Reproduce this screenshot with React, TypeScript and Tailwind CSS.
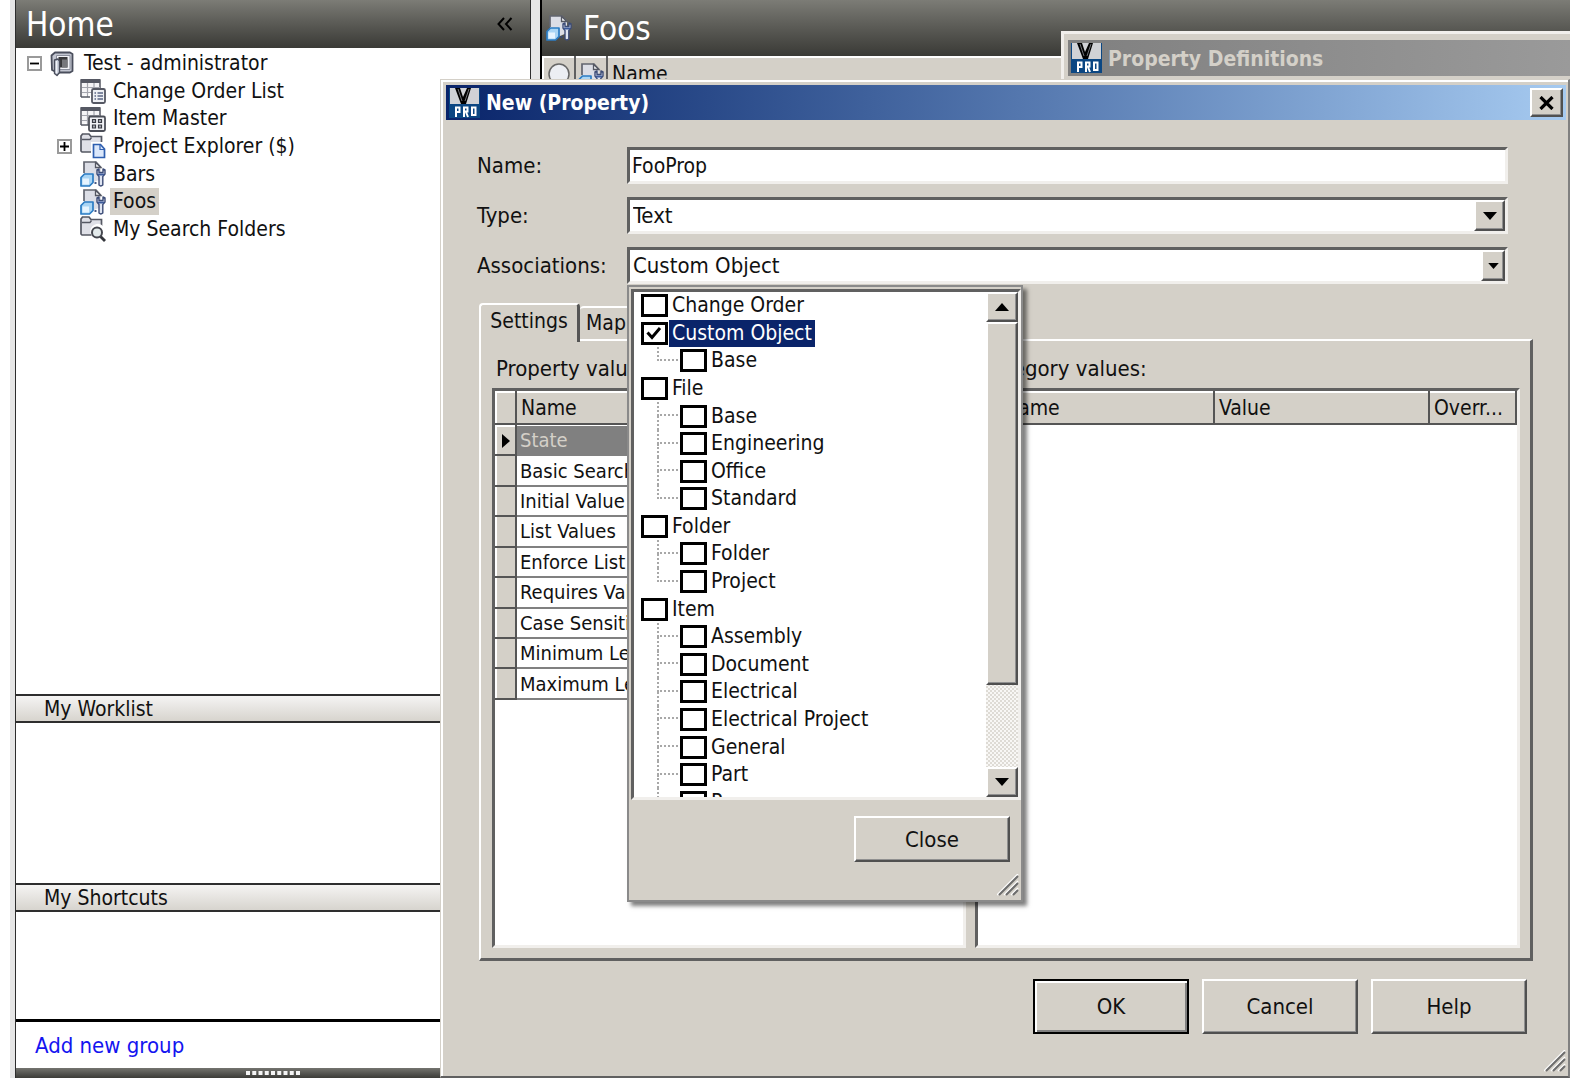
import { useState } from 'react'
import type { ReactNode } from 'react'

const raised = 'border-2 border-t-white border-l-white border-r-[#505050] border-b-[#505050] bg-[#d4d0c8] shadow-[inset_-1px_-1px_0_#909090]'
const sunken = 'border-[3px] border-t-[#606060] border-l-[#606060] border-r-[#f1efec] border-b-[#f1efec]'

type Node = { label: string; children?: string[] }

const associations: Node[] = [
  { label: 'Change Order' },
  { label: 'Custom Object', children: ['Base'] },
  { label: 'File', children: ['Base', 'Engineering', 'Office', 'Standard'] },
  { label: 'Folder', children: ['Folder', 'Project'] },
  { label: 'Item', children: ['Assembly', 'Document', 'Electrical', 'Electrical Project', 'General', 'Part', 'P'] },
]

const settings = [
  'State',
  'Basic Search',
  'Initial Value',
  'List Values',
  'Enforce List Values',
  'Requires Value',
  'Case Sensitivity',
  'Minimum Length',
  'Maximum Length',
]

function VaultIcon() {
  return (
    <svg viewBox="0 0 24 26" className="h-[26px] w-6 shrink-0">
      <path d="M1.500 4.500 5 1.500h15l2.500 1.500v17L20 21.500H7L2 19z" fill="#c3c6d1" stroke="#4a4e5c" strokeWidth="1.800" strokeLinejoin="round" />
      <path d="M6.500 4.500h13.500v14H6.500z" fill="#f2f3f7" stroke="#8b8f9c" />
      <path d="M8.500 6h9v10.500h-9z" fill="#38383a" />
      <path d="M12 8.500h5.500v8H12z" fill="#77787c" />
      <path d="M4.500 9 8 8l1.500 2v11.500L7 24.500l-2.500-2z" fill="#c9cedb" stroke="#4a4e5c" strokeWidth="1.400" strokeLinejoin="round" />
      <path d="M6.500 10v12" stroke="#f2f4f9" strokeWidth="1.300" />
    </svg>
  )
}

function SheetIcon({ kind }: { kind: 'list' | 'grid' }) {
  return (
    <svg viewBox="0 0 26 26" className="size-[26px] shrink-0">
      <path d="M1 19V2h19v8" fill="#f4f4f6" stroke="#555863" strokeWidth="1.500" />
      <path d="M1 1h19v4H1z" fill="#555863" />
      <path d="M2 9.500h18M2 14.500h10M7.500 5v14M14 5v6" stroke="#a4a6ae" strokeWidth="1.200" />
      <path d="M1 19h9" stroke="#555863" strokeWidth="1.500" />
      {kind === 'list' ? (
        <>
          <rect x="12" y="11" width="13" height="14" rx="1.500" fill="#eef0f4" stroke="#555863" strokeWidth="1.800" />
          <path d="M14.500 15h1.500M17.500 15h5.500M14.500 18h1.500M17.500 18h5.500M14.500 21h1.500M17.500 21h5.500" stroke="#5b6584" strokeWidth="1.300" />
        </>
      ) : (
        <>
          <rect x="9" y="10.500" width="16" height="14.500" rx="1.500" fill="#f1f2f6" stroke="#4c4f58" strokeWidth="1.800" />
          <path d="M12.500 13.500h3v3h-3zM18.500 13.500h3v3h-3zM12.500 19h3v3h-3zM18.500 19h3v3h-3z" fill="#aeb1ba" stroke="#3a3c44" strokeWidth="1.200" />
        </>
      )}
    </svg>
  )
}

function FolderIcon({ kind }: { kind: 'doc' | 'search' }) {
  return (
    <svg viewBox="0 0 26 26" className="size-[26px] shrink-0">
      <path d="M1 18V3l1.500-2H9l2 2.500h10.500V19H2z" fill="#dfe0e7" stroke="#555863" strokeWidth="1.700" />
      <path d="M2 6.500h8l1.500-2" fill="none" stroke="#555863" strokeWidth="1.400" />
      {kind === 'doc' ? (
        <>
          <path d="M11 9h15v17H11z" fill="#fff" />
          <path d="M13.500 11.500h7l4 4.500v8.500h-11z" fill="#dce8fb" stroke="#2f5fb0" strokeWidth="1.700" />
          <path d="M20 12v4.500h4.500" fill="none" stroke="#2f5fb0" strokeWidth="1.200" />
        </>
      ) : (
        <>
          <path d="M10.500 17a7.500 7.500 0 0 1 13-6.500V21H12z" fill="#fff" />
          <path d="M20.500 20.500 25 25" stroke="#33353b" strokeWidth="2.800" />
          <circle cx="17" cy="16.500" r="5" fill="#e4ebec" stroke="#45474f" strokeWidth="2" />
        </>
      )}
    </svg>
  )
}

function ObjectIcon() {
  return (
    <svg viewBox="0 0 26 26" className="size-[26px] shrink-0">
      <path d="M4 13V1h12l5 5v12l-7 3H4z" fill="#dcdee6" />
      <path d="M4 12V1h12L21 6.500" fill="none" stroke="#62656f" strokeWidth="1.700" />
      <path d="M15.500 1.500v5H21z" fill="#f5f6f8" stroke="#555863" strokeWidth="1.300" />
      <path d="M1 16.500 4.500 13H13v8.500L9.500 25H1z" fill="#a9d5f5" stroke="#2b7cc4" strokeWidth="1.700" strokeLinejoin="round" />
      <path d="M2.500 17.500h6.500v6H2.500z" fill="#e6f4ff" />
      <path d="M14.500 22h2" stroke="#34497a" strokeWidth="1.800" />
      <path d="M17 9v4l2 2.500v8.500q1.800 1.800 3.800 0v-8.500L25 13V9l-2-1v3.500h-4V8z" fill="#dfe5f2" stroke="#3c4c77" strokeWidth="1.400" strokeLinejoin="round" />
      <path d="M18 12.500h6v2h-6z" fill="#3c5a9a" />
    </svg>
  )
}

function ProIcon() {
  return (
    <svg viewBox="0 0 31 30" aria-hidden="true" className="h-[30px] w-[31px] shrink-0">
      <rect width="31" height="30" fill="#0b4783" />
      <rect x="1" width="29" height="16" fill="#d0d2d6" />
      <path d="M6 0h5l3 9 4-9h4l-5 16h-5z" fill="#000" />
      <path d="M9 1l4 12M20 1l-4 12" stroke="#6d6f75" />
      <path d="M7 29V19.500h3.500V24H7M15 29V19.500h3.500v4H15M17 24l2 5M23 19.500h3.500V27H23z" fill="none" stroke="#fff" strokeWidth="2" />
    </svg>
  )
}

function Arrow({ up, small }: { up?: boolean; small?: boolean }) {
  return (
    <svg viewBox="0 0 14 8" className={small ? 'h-[6px] w-[11px]' : 'h-2 w-[14px]'}>
      <path d={up ? 'M0 8h14L7 0z' : 'M0 0h14L7 8z'} fill="#000" />
    </svg>
  )
}

function Grip() {
  return (
    <svg viewBox="0 0 22 22" aria-hidden="true" className="size-[22px]">
      <path d="M0 21 21 0M7 21 21 7M14 21l7-7" stroke="#fff" strokeWidth="1.500" />
      <path d="M2 21 21 2M9 21 21 9M16 21l5-5" stroke="#6d6d6d" strokeWidth="2" />
    </svg>
  )
}

function Expander({ open }: { open?: boolean }) {
  return (
    <button aria-label={open ? 'Collapse' : 'Expand'} className="flex size-[15px] shrink-0 items-center justify-center border-2 border-[#9a9a9a] bg-white">
      <svg viewBox="0 0 9 9" className="size-[9px]">
        <path d={open ? 'M0 4.500h9' : 'M0 4.500h9M4.500 0v9'} stroke="#000" strokeWidth="1.800" />
      </svg>
    </button>
  )
}

function TreeRow({ icon, children, expander, selected }: { icon: ReactNode; children: ReactNode; expander?: ReactNode; selected?: boolean }) {
  return (
    <li className="flex items-center pl-[41px]">
      <span className="flex w-[23px] shrink-0">{expander}</span>
      {icon}
      <span className={selected ? 'ml-1 bg-[#d4d0c8] px-[3px]' : 'ml-1 px-[3px]'}>{children}</span>
    </li>
  )
}

function GroupHeader({ children }: { children: ReactNode }) {
  return (
    <h2 className="flex h-[29px] shrink-0 items-center border-y-2 border-[#2e2e2e] bg-linear-to-b from-[#f5f4f3] to-[#d7d4ce] pt-[2px] pl-[28px]">
      {children}
    </h2>
  )
}

function Sidebar() {
  return (
    <aside className="flex w-[516px] shrink-0 flex-col border-x border-[#2e2e2e] bg-white">
      <header className="flex h-12 shrink-0 items-center justify-between bg-linear-to-b from-[#7c7c76] to-[#3a3a36] pr-[17px] pl-[10px]">
        <h1 className="text-[33px] leading-none text-white">Home</h1>
        <button aria-label="Collapse panel">
          <svg viewBox="0 0 16 14" className="h-[14px] w-4">
            <path d="M7 1 1.500 7 7 13M14.500 1 9 7l5.500 6" fill="none" stroke="#000" strokeWidth="2" />
          </svg>
        </button>
      </header>
      <div className="flex-1 pt-[2px]">
        <ul className="grid h-[193px] auto-rows-fr">
          <li className="flex items-center pl-[11px]">
            <Expander open />
            <span className="ml-[8px] flex"><VaultIcon /></span>
            <span className="ml-[7px] px-[3px]">Test - administrator</span>
          </li>
          <TreeRow icon={<SheetIcon kind="list" />}>Change Order List</TreeRow>
          <TreeRow icon={<SheetIcon kind="grid" />}>Item Master</TreeRow>
          <TreeRow icon={<FolderIcon kind="doc" />} expander={<Expander />}>Project Explorer ($)</TreeRow>
          <TreeRow icon={<ObjectIcon />}>Bars</TreeRow>
          <TreeRow icon={<ObjectIcon />} selected>Foos</TreeRow>
          <TreeRow icon={<FolderIcon kind="search" />}>My Search Folders</TreeRow>
        </ul>
      </div>
      <GroupHeader>My Worklist</GroupHeader>
      <div className="h-[160px] shrink-0" />
      <GroupHeader>My Shortcuts</GroupHeader>
      <div className="h-[107px] shrink-0" />
      <div className="flex h-[49px] shrink-0 items-center border-t-[3px] border-black pl-[19px]">
        <a href="#" className="text-[22px] text-[#1414f0]">Add new group</a>
      </div>
      <div className="flex h-[10px] shrink-0 items-center justify-center bg-linear-to-b from-[#74746f] to-[#3c3c38]">
        <svg viewBox="0 0 54 4" className="h-1 w-[54px]">
          <path d="M0 2h54" stroke="#f4f4f4" strokeWidth="4" strokeDasharray="4 2.250" />
        </svg>
      </div>
    </aside>
  )
}

function FoosPane() {
  return (
    <main className="min-w-0 flex-1 border-l-2 border-black bg-white">
      <header className="flex h-14 items-center bg-linear-to-b from-[#7c7c76] to-[#3a3a36] pl-1">
        <ObjectIcon />
        <h1 className="ml-[11px] text-[33px] leading-none text-white">Foos</h1>
      </header>
      <table className="w-full border-t-2 border-l-2 border-[#606060] bg-[#d4d0c8]">
        <thead>
          <tr>
            <th scope="col" aria-label="Status" className="w-8 border-2 border-t-white border-r-[#606060] border-l-white">
              <svg viewBox="0 0 22 22" className="mx-auto size-[22px]">
                <circle cx="11" cy="11" r="10" fill="#eceef3" stroke="#666" strokeWidth="1.500" />
              </svg>
            </th>
            <th scope="col" aria-label="Kind" className="w-8 border-2 border-t-white border-r-[#606060] border-l-white pt-1">
              <span className="flex justify-center"><ObjectIcon /></span>
            </th>
            <th scope="col" className="h-[34px] border-t-2 border-l-2 border-white pl-1 text-left font-normal">Name</th>
          </tr>
        </thead>
      </table>
    </main>
  )
}

function HeadCell({ children, className }: { children?: ReactNode; className: string }) {
  return (
    <th scope="col" className={`border-2 border-t-white border-r-[#555] border-b-[#555] border-l-white bg-[#d4d0c8] px-1 text-left leading-6 font-normal ${className}`}>
      {children}
    </th>
  )
}

function SettingsTab() {
  return (
    <div className="relative z-0 flex flex-1 gap-[9px] border-t-2 border-r-[3px] border-b-[3px] border-l-2 border-t-white border-r-[#606060] border-b-[#606060] border-l-white pt-[14px] pr-[10px] pb-[10px] pl-[11px]">
      <section className="flex w-[474px] shrink-0 flex-col">
        <h2 className="h-[33px] pl-1 text-[22px] leading-7">Property values:</h2>
        <div className={`flex-1 overflow-hidden bg-white ${sunken}`}>
          <table className="w-full table-fixed border-collapse whitespace-nowrap">
            <thead>
              <tr className="h-[32px]">
                <HeadCell className="w-5" />
                <HeadCell className="">Name</HeadCell>
              </tr>
            </thead>
          </table>
          <table className="h-[275px] w-full table-fixed border-collapse text-[20px] whitespace-nowrap">
            <tbody>
              {settings.map((s, i) => (
                <tr key={s} className={i === 0 ? 'bg-[#808080] text-[#d4d0c8]' : ''}>
                  <td className="w-5 border-2 border-t-white border-r-[#555] border-b-[#555] border-l-white bg-[#d4d0c8]">
                    {i === 0 && (
                      <svg viewBox="0 0 8 14" className="mx-auto h-[14px] w-2">
                        <path d="M0 0v14l8-7z" fill="#000" />
                      </svg>
                    )}
                  </td>
                  <th scope="row" className="border-b-2 border-[#808080] pl-[3px] text-left leading-6 font-normal">{s}</th>
                </tr>
              ))}
            </tbody>
          </table>
        </div>
      </section>
      <section className="flex min-w-0 flex-1 flex-col">
        <h2 className="h-[33px] pl-1 text-[22px] leading-7">Category values:</h2>
        <div className={`flex-1 overflow-hidden bg-white ${sunken}`}>
          <table className="w-full table-fixed border-collapse whitespace-nowrap">
            <thead>
              <tr className="h-[32px]">
                <HeadCell className="w-5" />
                <HeadCell className="">Name</HeadCell>
                <HeadCell className="">Value</HeadCell>
                <HeadCell className="w-[87px]">Overr...</HeadCell>
              </tr>
            </thead>
          </table>
        </div>
      </section>
    </div>
  )
}

function CheckItem({ label, checked, onChange, selected }: { label: string; checked: boolean; onChange: () => void; selected?: boolean }) {
  return (
    <label className="flex h-full items-center">
      <span className="relative flex">
        <input
          type="checkbox"
          checked={checked}
          onChange={onChange}
          className="h-[23px] w-[27px] appearance-none border-[3px] border-black bg-white"
        />
        {checked && (
          <svg viewBox="0 0 27 23" className="pointer-events-none absolute inset-0 h-[23px] w-[27px]">
            <path d="M6.500 10.500 11 15.500 19 6" fill="none" stroke="#000" strokeWidth="3" />
          </svg>
        )}
      </span>
      <span className={selected ? 'ml-[1px] bg-[#0a246a] px-[3px] text-white' : 'ml-[1px] px-[3px]'}>{label}</span>
    </label>
  )
}

function AssociationsPopup() {
  const [checked, setChecked] = useState<string[]>(['Custom Object'])
  const toggle = (id: string) =>
    setChecked(checked.includes(id) ? checked.filter((c) => c !== id) : [...checked, id])

  return (
    <div className="absolute top-full left-0 z-10 mt-px flex h-[617px] w-[396px] flex-col border-2 border-[#8a8a8a] bg-[#d4d0c8] py-[2px] pl-[2px] shadow-[4px_4px_4px_#00000080]">
      <div className={`flex h-[511px] shrink-0 overflow-hidden bg-white ${sunken}`}>
        <ul className="grid h-[524px] flex-1 auto-rows-fr">
          {associations.flatMap(({ label, children = [] }) => [
            <li key={label} className="flex pl-[7px]">
              <CheckItem
                label={label}
                checked={checked.includes(label)}
                onChange={() => toggle(label)}
                selected={label === 'Custom Object'}
              />
            </li>,
            ...children.map((child, i) => (
              <li key={`${label}/${child}`} className="flex pl-[23px]">
                <span className="flex w-[23px] flex-col">
                  <span className="mr-[2px] h-1/2 border-b-2 border-l-2 border-dotted border-[#a8a8a8]" />
                  {i < children.length - 1 && <span className="h-1/2 border-l-2 border-dotted border-[#a8a8a8]" />}
                </span>
                <CheckItem
                  label={child}
                  checked={checked.includes(`${label}/${child}`)}
                  onChange={() => toggle(`${label}/${child}`)}
                />
              </li>
            )),
          ])}
        </ul>
        <div className="flex w-8 flex-col bg-[repeating-conic-gradient(#dedbd5_0_25%,#f8f7f5_0_50%)] bg-size-[4px_4px]">
          <button aria-label="Scroll up" className={`flex h-[30px] items-center justify-center ${raised}`}><Arrow up /></button>
          <div className={`h-[363px] ${raised}`} />
          <button aria-label="Scroll down" className={`mt-auto flex h-[30px] items-center justify-center ${raised}`}><Arrow /></button>
        </div>
      </div>
      <div className="flex justify-end pt-4 pr-[11px]">
        <button className={`h-[46px] w-[156px] text-[22px] ${raised}`}>Close</button>
      </div>
      <div className="mt-auto flex justify-end pr-[2px] pb-[2px]"><Grip /></div>
    </div>
  )
}

function PropertyDialog() {
  return (
    <div role="dialog" aria-label="New (Property)" className="absolute top-[79px] right-0 bottom-0 left-[440px] flex flex-col border-t border-r-2 border-b-2 border-l border-t-[#d4d0c8] border-r-[#808080] border-b-[#606060] border-l-[#d4d0c8] bg-[#d4d0c8] shadow-[inset_2px_2px_0_#fff]">
      <header className="mt-[5px] mr-[2px] ml-[5px] flex h-[35px] shrink-0 items-center bg-linear-to-r from-[#0a246a] to-[#a6caf0] pr-[3px] pl-[3px]">
        <ProIcon />
        <h1 className="ml-[6px] flex-1 pt-[2px] text-[21px] font-bold text-white">New (Property)</h1>
        <button aria-label="Close window" className={`flex h-[29px] w-[33px] items-center justify-center ${raised}`}>
          <svg viewBox="0 0 15 14" className="h-[14px] w-[15px]">
            <path d="M1.500 1 13.500 13M13.500 1 1.500 13" stroke="#000" strokeWidth="3.200" />
          </svg>
        </button>
      </header>

      <form className="relative mt-[27px] mr-[60px] ml-9 grid grid-cols-[150px_1fr] gap-y-[13px]" onSubmit={(e) => e.preventDefault()}>
        <label htmlFor="prop-name" className="flex items-center text-[22px]">Name:</label>
        <input id="prop-name" defaultValue="FooProp" className={`h-[37px] min-w-0 bg-white pl-[2px] ${sunken}`} />

        <label htmlFor="prop-type" className="flex items-center text-[22px]">Type:</label>
        <div className={`relative flex h-[37px] bg-white ${sunken}`}>
          <select id="prop-type" className="w-full appearance-none pl-[3px] text-[22px]">
            <option>Text</option>
          </select>
          <span className={`pointer-events-none absolute inset-y-0 right-0 flex w-[31px] items-center justify-center ${raised}`}><Arrow /></span>
        </div>

        <label htmlFor="prop-assoc" className="flex items-center text-[22px]">Associations:</label>
        <div className="relative">
          <div className={`relative flex h-[37px] bg-white ${sunken}`}>
            <select id="prop-assoc" className="w-full appearance-none pl-[3px] text-[22px]">
              <option>Custom Object</option>
            </select>
            <span className={`pointer-events-none absolute inset-y-0 right-0 flex w-6 items-center justify-center ${raised}`}><Arrow small /></span>
          </div>
          <AssociationsPopup />
        </div>
      </form>

      <div className="mt-[19px] mr-[35px] ml-[38px] flex flex-1 flex-col">
        <div role="tablist" className="flex h-9 shrink-0 items-end">
          <button role="tab" aria-selected="true" className="relative z-1 -mb-[3px] h-[39px] w-[101px] rounded-t border-t-2 border-r-[3px] border-l-2 border-t-white border-r-[#555] border-l-white bg-[#d4d0c8] pb-[5px]">Settings</button>
          <button role="tab" aria-selected="false" className="h-[33px] w-[110px] rounded-t border-t-2 border-r-[3px] border-t-white border-r-[#555] pl-[6px] text-left">Mapping</button>
        </div>
        <SettingsTab />
      </div>

      <div className="mt-[18px] mr-[41px] flex h-[55px] shrink-0 justify-end gap-[13px] text-[22px]">
        <button className="w-[156px] border-2 border-black bg-[#d4d0c8] shadow-[inset_2px_2px_0_#fff,inset_-2px_-2px_0_#808080]">OK</button>
        <button className={`w-[156px] ${raised}`}>Cancel</button>
        <button className={`w-[156px] ${raised}`}>Help</button>
      </div>
      <div className="mt-[16px] flex shrink-0 justify-end pr-[2px] pb-[4px]"><Grip /></div>
    </div>
  )
}

export default function App() {
  return (
    <div className="relative flex min-h-screen overflow-hidden bg-[#e6e6e6] font-['DejaVu_Sans_Condensed','DejaVu_Sans',sans-serif] text-[21px] leading-[27px] text-[#111]">
      <div className="mr-[5px] w-[10px] shrink-0 bg-white" />
      <Sidebar />
      <div className="w-[9px] shrink-0" />
      <FoosPane />

      <div className="absolute top-[31px] right-0 bottom-0 left-[1061px] border-t-[3px] border-l-[3px] border-[#f1efec] bg-[#d4d0c8] pt-[6px] pl-[4px]">
        <header className="flex h-9 items-center bg-linear-to-r from-[#808080] to-[#9a9a9a] pl-[3px]">
          <ProIcon />
          <h1 className="ml-[6px] pt-[2px] text-[21px] font-bold text-[#d4d0c8]">Property Definitions</h1>
        </header>
      </div>

      <PropertyDialog />
    </div>
  )
}
